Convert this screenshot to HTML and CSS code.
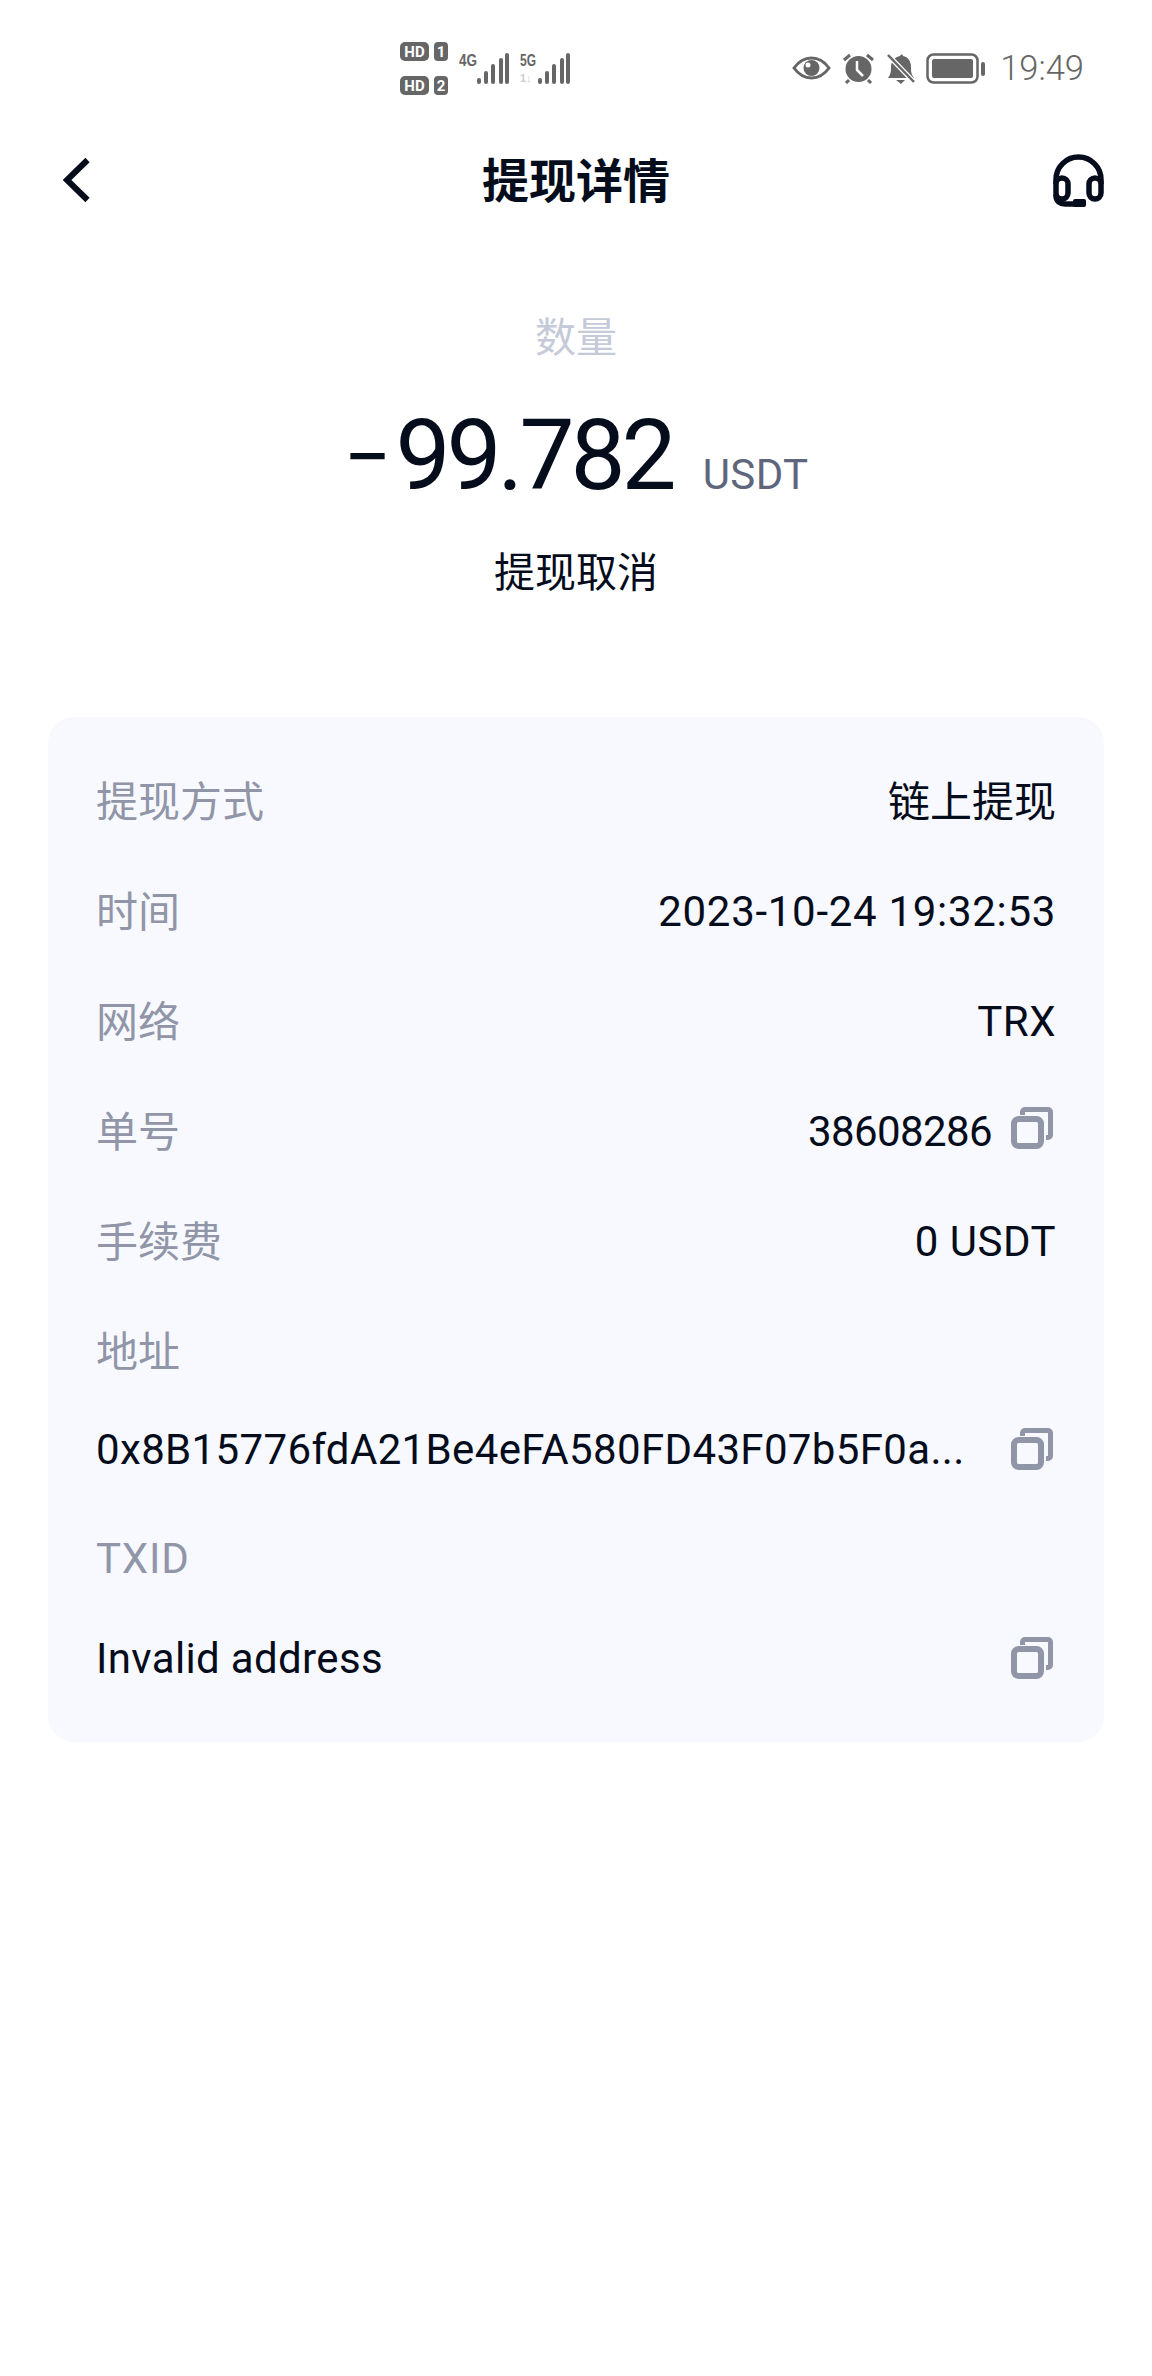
FILE: index.html
```html
<!DOCTYPE html>
<html lang="zh-CN">
  <head>
    <meta charset="UTF-8">
    <meta name="viewport" content="width=device-width, initial-scale=1.0">
    <title>提现详情</title>
    <link rel="stylesheet" href="styles.css">
  </head>
  <body>
    <div class="status-bar">
      <div class="sim-group">
        <svg width="48" height="53" viewBox="0 0 48 53">
          <rect x="0" y="0" width="29" height="19" rx="5" fill="#666"/>
          <rect x="34" y="0" width="14" height="19" rx="4" fill="#666"/>
          <rect x="0" y="34" width="29" height="19" rx="5" fill="#666"/>
          <rect x="34" y="34" width="14" height="19" rx="4" fill="#666"/>
          <text x="14.500" y="15" class="sim-text" text-anchor="middle">HD</text>
          <text x="41" y="15" class="sim-text" text-anchor="middle">1</text>
          <text x="14.500" y="49" class="sim-text" text-anchor="middle">HD</text>
          <text x="41" y="49" class="sim-text" text-anchor="middle">2</text>
        </svg>
        <svg width="50" height="31" viewBox="0 0 50 31">
          <text x="0" y="13" class="net-text" textLength="18" lengthAdjust="spacingAndGlyphs">4G</text>
          <path d="M20 27v2M27 20v9M34 13v16M42 7v22M48 2v27" stroke="#666" stroke-width="4" stroke-linecap="round"/>
        </svg>
        <svg width="50" height="31" viewBox="0 0 50 31">
          <text x="0" y="13" class="net-text" textLength="16" lengthAdjust="spacingAndGlyphs">5G</text>
          <text x="0" y="29" class="net-faint">1↓</text>
          <path d="M20 27v2M27 20v9M34 13v16M42 7v22M48 2v27" stroke="#666" stroke-width="4" stroke-linecap="round"/>
        </svg>
      </div>
      <div class="status-right">
        <svg width="39" height="24" viewBox="0 0 39 24">
          <path d="M2 12C7 5 12 2 19.500 2S32 5 37 12c-5 7-10 10-17.500 10S7 19 2 12z" fill="none" stroke="#666" stroke-width="3"/>
          <circle cx="19.500" cy="12" r="8" fill="#666"/>
          <circle cx="16" cy="9" r="2.500" fill="#fff"/>
        </svg>
        <svg width="33" height="31" viewBox="0 0 33 31">
          <circle cx="16.500" cy="16" r="13" fill="#666"/>
          <path d="M2 7l6-5M31 7l-6-5M7 27l-3 3M26 27l3 3" stroke="#666" stroke-width="3" fill="none"/>
          <path d="M15 8v9l6 6" stroke="#fff" stroke-width="2.500" fill="none"/>
        </svg>
        <svg width="29" height="31" viewBox="0 0 29 31">
          <path d="M2 25c3-4 3-7 3-11 0-6 4-10 9-11 1-2 3-2 3 0 5 1 8 5 8 11 0 4 0 7 3 11z" fill="#666"/>
          <path d="M10 27h9l-4 4z" fill="#666"/>
          <path d="M1 1l27 28" stroke="#fff" stroke-width="5"/>
          <path d="M2 2l26 27" stroke="#666" stroke-width="2.500"/>
        </svg>
        <svg width="59" height="31" viewBox="0 0 59 31">
          <rect x="1.500" y="1.500" width="50" height="28" rx="6" fill="none" stroke="#666" stroke-width="2.500"/>
          <rect x="6" y="6" width="41" height="19" rx="2" fill="#666"/>
          <rect x="55" y="9" width="4" height="14" rx="2" fill="#666"/>
        </svg>
        <span class="clock">19:49</span>
      </div>
    </div>

    <header class="nav">
      <svg class="nav-back" width="30" height="46" viewBox="0 0 30 46">
        <path d="M25.500 3L5 23l20.500 20" fill="none" stroke="#050c1c" stroke-width="6"/>
      </svg>
      <h1 class="nav-title">提现详情</h1>
      <svg class="nav-help" width="51" height="53" viewBox="0 0 51 53">
        <path d="M3 30V25.500a22.500 22.500 0 0 1 45 0V30" fill="none" stroke="#050c1c" stroke-width="5.500"/>
        <rect x="3" y="24" width="12" height="21" rx="6" fill="#fff" stroke="#050c1c" stroke-width="5.500"/>
        <rect x="36" y="24" width="12" height="21" rx="6" fill="#fff" stroke="#050c1c" stroke-width="5.500"/>
        <path d="M3 40v2c0 5 4 8 9 8h14" fill="none" stroke="#050c1c" stroke-width="5.500"/>
        <rect x="20" y="45" width="13" height="8" rx="2" fill="#050c1c"/>
      </svg>
    </header>

    <section class="summary">
      <div class="summary-label">数量</div>
      <div class="summary-amount"><span class="minus">−</span><span class="amount">99.782</span><span class="unit">USDT</span></div>
      <div class="summary-status">提现取消</div>
    </section>

    <section class="card">
      <div class="row"><span class="label">提现方式</span><span class="value">链上提现</span></div>
      <div class="row"><span class="label">时间</span><span class="value latin date">2023-10-24 19:32:53</span></div>
      <div class="row"><span class="label">网络</span><span class="value latin">TRX</span></div>
      <div class="row">
        <span class="label">单号</span>
        <span class="value with-copy">
          <span class="latin number">38608286</span>
          <svg class="copy" width="42" height="42" viewBox="0 0 42 42"><use href="#copy-icon"/></svg>
        </span>
      </div>
      <div class="row"><span class="label">手续费</span><span class="value latin">0 USDT</span></div>
      <div class="row"><span class="label">地址</span></div>
      <div class="row-long">
        <span>0x8B15776fdA21Be4eFA580FD43F07b5F0a...</span>
        <svg class="copy" width="42" height="42" viewBox="0 0 42 42"><use href="#copy-icon"/></svg>
      </div>
      <div class="row"><span class="label-latin">TXID</span></div>
      <div class="row-long">
        <span>Invalid address</span>
        <svg class="copy" width="42" height="42" viewBox="0 0 42 42"><use href="#copy-icon"/></svg>
      </div>
    </section>

    <svg class="defs" width="0" height="0">
      <symbol id="copy-icon" viewBox="0 0 42 42">
        <path d="M11.500 8V5a2.500 2.500 0 0 1 2.500-2.500h23A2.500 2.500 0 0 1 39.500 5v23a2.500 2.500 0 0 1-2.500 2.500h-2" fill="none" stroke="#9095a8" stroke-width="5"/>
        <rect x="3" y="12" width="27" height="27" rx="4.500" fill="none" stroke="#9095a8" stroke-width="6"/>
      </symbol>
    </svg>
  </body>
</html>
```

FILE: styles.css
```css
* {
    box-sizing: border-box;
}
body {
    margin: 0;
    background: #fff;
    color: #050c1c;
    font-family: Roboto, "Noto Sans CJK SC", sans-serif;
}
.status-bar {
    display: flex;
    justify-content: space-between;
    align-items: center;
    height: 64px;
    margin-top: 36px;
    padding-left: 400px;
    padding-right: 68px;
}
.sim-group {
    display: flex;
    align-items: center;
    gap: 11px;
}
.sim-text {
    font: bold 15px Roboto, sans-serif;
    fill: #fff;
}
.net-text {
    font: bold 16px "Liberation Sans", sans-serif;
    fill: #666;
}
.net-faint {
    font: bold 11px "Liberation Sans", sans-serif;
    fill: #ccc;
}
.status-right {
    display: flex;
    align-items: center;
    gap: 11px;
}
.clock {
    margin-left: 4px;
    color: #666;
    font-size: 34.5px;
    font-weight: 300;
}
.nav {
    display: grid;
    grid-template-columns: 1fr auto 1fr;
    align-items: center;
    height: 76px;
    margin-top: 42px;
    padding: 0 48px;
}
.nav-back {
    margin-left: 14px;
}
.nav-title {
    margin: 0;
    padding-bottom: 6px;
    font-size: 47px;
    font-weight: 700;
}
.nav-help {
    justify-self: end;
}
.summary {
    text-align: center;
    padding-top: 90px;
}
.summary-label {
    color: #c5cad8;
    font-size: 41px;
    line-height: 60px;
}
.summary-amount {
    height: 138px;
    margin-top: 33px;
    line-height: 110px;
}
.minus {
    margin-right: 4px;
    font-size: 84px;
    vertical-align: 3px;
}
.amount {
    font-size: 98px;
    letter-spacing: -4px;
}
.unit {
    margin-left: 30px;
    color: #5e667c;
    font-size: 42px;
    letter-spacing: 0.4px;
}
.summary-status {
    margin-top: 4px;
    font-size: 41px;
    line-height: 60px;
}
.card {
    margin: 114px 48px 0;
    padding: 26px 48px 42px;
    background: #f8f9fe;
    border-radius: 26px;
}
.row {
    display: flex;
    justify-content: space-between;
    align-items: center;
    height: 110px;
    font-size: 42px;
}
.label {
    color: #9095a8;
}
.label-latin {
    padding-top: 2px;
    color: #9095a8;
    letter-spacing: 0.8px;
}
.value {
    color: #050c1c;
}
.latin {
    padding-top: 6px;
    letter-spacing: 0.5px;
}
.date {
    letter-spacing: 0.7px;
}
.number {
    letter-spacing: -0.6px;
}
.with-copy {
    display: flex;
    align-items: center;
    gap: 19px;
    margin-right: 3px;
}
.row-long {
    display: flex;
    justify-content: space-between;
    align-items: center;
    height: 84px;
    margin-top: 4px;
    margin-bottom: 11px;
    padding-right: 3px;
    font-size: 42px;
    letter-spacing: 0.35px;
}
.row-long:last-child {
    margin-bottom: 0;
}
.copy {
    display: block;
}
.defs {
    position: absolute;
}
```
